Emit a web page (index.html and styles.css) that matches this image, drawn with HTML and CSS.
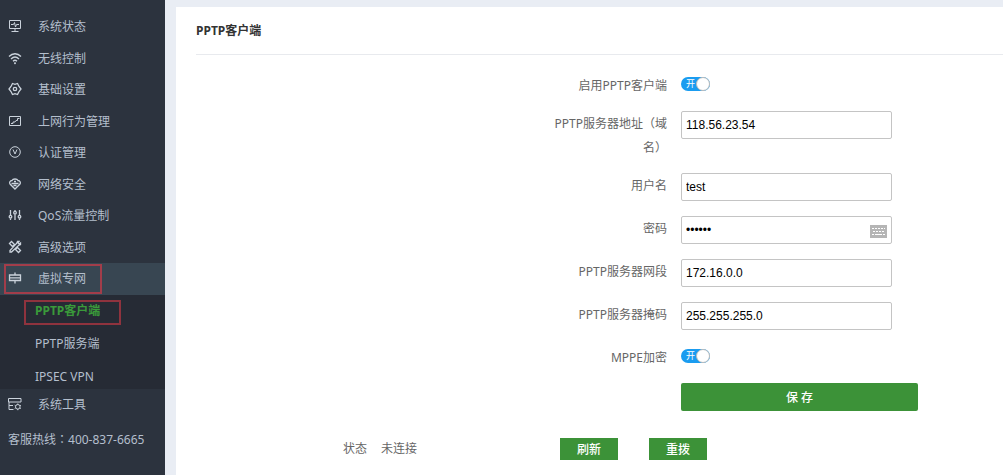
FILE: index.html
```html
<!DOCTYPE html>
<html lang="zh-CN">
<head>
<meta charset="utf-8">
<title>PPTP客户端</title>
<link rel="stylesheet" href="styles.css">
</head>
<body>
<div class="app">
  <aside class="sidebar">
    <nav class="menu">
      <a class="item" href="#"><svg class="icon" viewBox="0 0 14 14"><path d="M1.500 1.500h11v8h-11zM3.500 12.500h7M7 9.500v3M3 5.500h2.500l1-2 1 4.500 1-2.500H11"/></svg>系统状态</a>
      <a class="item" href="#"><svg class="icon bold" viewBox="0 0 14 14"><path d="M1 5.500c3.500-3.700 8.500-3.700 12 0M3 8c2.500-2.500 5.500-2.500 8 0M5 10.200c1.300-1.200 2.700-1.200 4 0"/><circle cx="7" cy="12.300" r=".4"/></svg>无线控制</a>
      <a class="item" href="#"><svg class="icon bold" viewBox="0 0 14 14"><path d="M4.500 1.500l2.500.8 2.500-.8 1.500 3L13 7l-2 2.500-1.500 3-2.500-.8-2.500.8L3 9.500 1 7l2-2.500z"/><circle cx="7" cy="7" r="1.700"/></svg>基础设置</a>
      <a class="item" href="#"><svg class="icon" viewBox="0 0 14 14"><path d="M1.500 2.500h11v9h-11zM3 9.500h2V8h2l1-1.500h1.500v-2h2"/></svg>上网行为管理</a>
      <a class="item" href="#"><svg class="icon" viewBox="0 0 14 14"><circle cx="7" cy="7" r="5.300"/><path d="M5 4.500l2 4.500 2-4.500"/></svg>认证管理</a>
      <a class="item" href="#"><svg class="icon bold" viewBox="0 0 14 14"><path d="M4 3.500C5 1.500 9 1.500 10 3.500c2 0 3 2 2 3.500L7 12 2 7C1 5.500 2 3.500 4 3.500zM3.500 6.500h7M6 4.500h2M5.500 8.500h3"/></svg>网络安全</a>
      <a class="item" href="#"><svg class="icon bold" viewBox="0 0 14 14"><path d="M2.500 2v5M2.500 10.500V12M7 2v1M7 6.500V12M11.500 2v5M11.500 10.500V12"/><circle cx="2.500" cy="8.700" r="1.300"/><circle cx="7" cy="4.700" r="1.300"/><circle cx="11.500" cy="8.700" r="1.300"/></svg>QoS流量控制</a>
      <a class="item" href="#"><svg class="icon bold" viewBox="0 0 14 14"><path d="M1.500 3.500l2-2 3 3-2 2zM7.500 9.500l2-2 3 3-2 2zM9.500 1.500l-1 2-6.500 7v1.500h1.500l7-6.500 2-1V3L11 4 10 3l1-1.500z"/></svg>高级选项</a>
      <a class="item active" href="#"><svg class="icon bold" viewBox="0 0 14 14"><path d="M1.500 4h11v5.500h-11zM2 6.800h10M7 1.500V4M7 9.500v3"/></svg>虚拟专网</a>
    </nav>
    <nav class="submenu">
      <a class="subitem current" href="#">PPTP客户端</a>
      <a class="subitem" href="#">PPTP服务端</a>
      <a class="subitem" href="#">IPSEC VPN</a>
    </nav>
    <nav class="menu-end">
      <a class="item" href="#"><svg class="icon" viewBox="0 0 14 14"><path d="M.5 5V1.500h12.500V5zM1 5v7.500h4.500M1 8.500h4"/><circle cx="9.800" cy="9.800" r="2.300"/><path d="M9.800 6.500v1M9.800 12v1.200M6.700 8.200l1 .6M12 11l.9.500M12 8.800l.9-.6M6.700 11.500l1-.6"/></svg>系统工具</a>
    </nav>
    <p class="hotline">客服热线<span class="colon" lang="zh-TW">：</span>400-837-6665</p>
  </aside>
  <main class="panel">
    <h1 class="title">PPTP客户端</h1>
    <form class="form">
      <div class="row short"><label class="label" for="enable">启用PPTP客户端</label>
        <span class="switch"><input class="check" id="enable" type="checkbox" checked><span class="on">开</span></span></div>
      <div class="row"><label class="label" for="server">PPTP服务器地址（域名）</label><input class="text" id="server" type="text" value="118.56.23.54"></div>
      <div class="row"><label class="label" for="user">用户名</label><input class="text" id="user" type="text" value="test"></div>
      <div class="row"><label class="label" for="password">密码</label>
        <span class="secret"><input class="text" id="password" type="password" value="123456"><svg class="keyboard" viewBox="0 0 17 13"><path fill="#b5b5b5" d="M0 0h17v13H0z"/><path stroke="#fff" stroke-dasharray="2 1" d="M2 3.500h13M3 6.500h11M2 9.500h2M13 9.500h2"/><path stroke="#fff" d="M5 9.500h7"/></svg></span></div>
      <div class="row"><label class="label" for="subnet">PPTP服务器网段</label><input class="text" id="subnet" type="text" value="172.16.0.0"></div>
      <div class="row"><label class="label" for="mask">PPTP服务器掩码</label><input class="text" id="mask" type="text" value="255.255.255.0"></div>
      <div class="row short"><label class="label" for="mppe">MPPE加密</label>
        <span class="switch"><input class="check" id="mppe" type="checkbox" checked><span class="on">开</span></span></div>
      <div class="row"><button class="button save" type="submit">保 存</button></div>
    </form>
    <div class="status">
      <span>状态</span><span>未连接</span>
      <button class="button small" type="button">刷新</button>
      <button class="button small" type="button">重拨</button>
    </div>
  </main>
</div>
</body>
</html>
```
FILE: styles.css
```css
*, *::before, *::after { box-sizing: border-box; }
body {
  margin: 0;
  background: #e9edf4;
  color: #666;
  font: 12px/24px "Noto Sans", "Noto Sans CJK SC", sans-serif;
}
.app { display: flex; min-height: 100vh; }
.sidebar {
  flex: 0 0 165px;
  padding-top: 11px;
  background: #2c333e;
  color: #b4bfcd;
}
.item {
  display: flex;
  align-items: center;
  gap: 16px;
  height: 31px;
  padding-left: 8px;
  color: inherit;
  text-decoration: none;
}
.menu .item:nth-child(odd) { height: 32px; }
.icon {
  flex: none;
  width: 14px;
  height: 14px;
  margin-bottom: 2px;
  fill: none;
  stroke: #cbd3dc;
  stroke-width: 1;
}
.bold { stroke-width: 1.3; }
.active { position: relative; background: #384652; }
.active::after {
  content: "";
  position: absolute;
  inset: 1px 63px 1px 4px;
  border: 2px solid #a23d4a;
}
.submenu {
  display: flex;
  flex-direction: column;
  align-items: flex-start;
  gap: 9px;
  padding: 4px 0 0 24px;
  background: #262b35;
}
.subitem {
  height: 24px;
  padding-left: 11px;
  color: #b4bfcd;
  text-decoration: none;
}
.current {
  position: relative;
  color: #3a9a3a;
  font-weight: bold;
}
.current::after {
  content: "";
  position: absolute;
  top: 1px;
  left: 0;
  width: 97px;
  height: 25px;
  border: 2px solid #8f333e;
}
.hotline { margin: 8px 0 0; padding-left: 8px; }
.colon { font-family: "Noto Sans CJK TC", sans-serif; line-height: 1; }
.panel {
  flex: 1;
  min-width: 0;
  margin: 7px 0 0 11px;
  padding-left: 20px;
  background: #fff;
}
.title {
  margin: 0;
  padding: 12px 0 11px;
  border-bottom: 1px solid #e8eaee;
  color: #333;
  font-size: 12px;
  line-height: 24px;
}
.form {
  display: flex;
  flex-direction: column;
  gap: 13px;
  padding-top: 18px;
}
.row {
  display: grid;
  grid-template-columns: 116px 322px;
  column-gap: 14px;
  justify-content: end;
  align-items: start;
  min-height: 30px;
}
.short { min-height: 25px; }
.label { padding-top: 1px; text-align: right; }
.text {
  width: 211px;
  height: 28px;
  padding: 0 4px;
  border: 1px solid #c4c4c4;
  border-radius: 2px;
  background: #fff;
  color: #000;
  font: 12px "Liberation Sans", Arial, sans-serif;
}
.secret { display: flex; align-items: center; }
.keyboard { width: 17px; height: 13px; margin: 3px 0 0 -22px; fill: none; }
.switch { position: relative; width: 29px; height: 14px; margin-top: 4px; }
.check {
  display: block;
  appearance: none;
  width: 29px;
  height: 14px;
  margin: 0;
  border-radius: 7px;
  background: #1a9cf0;
}
.check::after {
  content: "";
  position: absolute;
  top: 0;
  right: 0;
  width: 14px;
  height: 14px;
  border: 1px solid #bbb;
  border-radius: 7px;
  background: #fff;
}
.on {
  position: absolute;
  top: 0;
  left: 5px;
  color: #fff;
  font-size: 9px;
  line-height: 14px;
  pointer-events: none;
}
.button {
  padding: 0;
  border: 0;
  background: #3c9238;
  color: #fff;
  font: 500 12px "Noto Sans", "Noto Sans CJK SC", sans-serif;
}
.save {
  grid-column: 2;
  width: 237px;
  height: 28px;
  border-radius: 2px;
}
.status {
  display: grid;
  grid-template-columns: 38px 179px 89px 58px;
  justify-content: end;
  align-items: center;
  margin-top: 24px;
  padding-right: 296px;
}
.small { width: 58px; height: 22px; }
```
